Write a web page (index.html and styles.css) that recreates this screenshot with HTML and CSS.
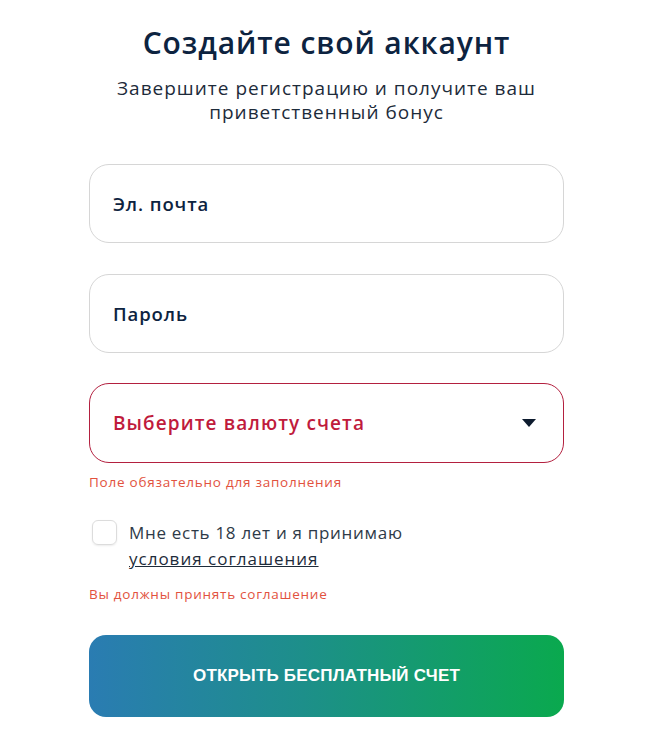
FILE: index.html
```html
<!DOCTYPE html>
<html lang="ru">
<head>
<meta charset="utf-8">
<title>Создайте свой аккаунт</title>
<link rel="stylesheet" href="styles.css">
</head>
<body>
<main class="page">
  <h1 class="title">Создайте свой аккаунт</h1>
  <p class="subtitle">Завершите регистрацию и получите ваш<br>приветственный бонус</p>
  <form class="form">
    <div class="field"><span class="field-label">Эл. почта</span></div>
    <div class="field"><span class="field-label">Пароль</span></div>
    <div class="field-group">
      <div class="field field-error">
        <span class="field-label">Выберите валюту счета</span>
        <svg class="caret" width="14" height="8" viewBox="0 0 14 8"><path d="M0 0H14L7 8Z" fill="#0d1b2e"/></svg>
      </div>
      <p class="error">Поле обязательно для заполнения</p>
    </div>
    <div class="agree">
      <span class="checkbox"></span>
      <span class="agree-text">Мне есть 18 лет и я принимаю<br><a class="agree-link" href="#">условия соглашения</a></span>
    </div>
    <p class="error error-agree">Вы должны принять соглашение</p>
    <button type="button" class="submit">ОТКРЫТЬ БЕСПЛАТНЫЙ СЧЕТ</button>
  </form>
</main>
</body>
</html>
```
FILE: styles.css
```css
* { box-sizing: border-box; }
body {
  margin: 0;
  background: #fff;
  font-family: "Open Sans", "Noto Sans", sans-serif;
  color: #0d2340;
}
.page {
  width: 475px;
  margin-left: 89px;
  padding-top: 24px;
}
.title {
  margin: 0;
  text-align: center;
  font-size: 30px;
  line-height: 38px;
  font-weight: 600;
  letter-spacing: 0.9px;
  color: #0d2340;
}
.subtitle {
  margin: 14px 0 0;
  text-align: center;
  font-size: 19px;
  line-height: 24px;
  letter-spacing: 1px;
  color: #1d2b3a;
}
.form {
  margin-top: 40px;
  display: flex;
  flex-direction: column;
}
.field {
  height: 79px;
  border: 1px solid #d6d6d6;
  border-radius: 20px;
  display: flex;
  align-items: center;
  justify-content: space-between;
  padding: 0 27px 0 23px;
  margin-bottom: 31px;
}
.field-label {
  font-size: 18.5px;
  font-weight: 600;
  letter-spacing: 0.9px;
  color: #0d2340;
}
.field-group .field { margin-bottom: 0; }
.field-group .field-error { height: 80px; margin-top: -1px; }
.field-error { border-color: #b3203f; }
.field-error .field-label { color: #c01b3c; font-size: 19px; font-weight: 600; letter-spacing: 1.1px; }
.error {
  margin: 10px 0 0;
  font-size: 13.5px;
  line-height: 18px;
  letter-spacing: 0.75px;
  color: #e2523e;
}
.agree {
  margin-top: 29px;
  display: flex;
  align-items: flex-start;
  gap: 12px;
  padding-left: 3px;
}
.checkbox {
  width: 25px;
  height: 25px;
  border: 1px solid #dcdcdc;
  border-radius: 6px;
  box-shadow: 0 1px 2px rgba(0,0,0,0.08);
  flex: none;
  margin-top: 0;
}
.agree-text {
  font-size: 17px;
  line-height: 26px;
  letter-spacing: 0.7px;
  color: #2e3a48;
}
.agree-link { color: #1d2b3a; text-decoration: underline; letter-spacing: 1px; }
.error-agree { margin-top: 13px; }
.submit {
  margin-top: 32px;
  height: 82px;
  border: 0;
  border-radius: 17px;
  background: linear-gradient(90deg, #2a7cb2 0%, #1d8f8a 45%, #0aa94e 100%);
  color: #fff;
  font-family: "Liberation Sans", Arial, sans-serif;
  font-weight: 700;
  font-size: 17px;
  letter-spacing: 0.2px;
}
```
